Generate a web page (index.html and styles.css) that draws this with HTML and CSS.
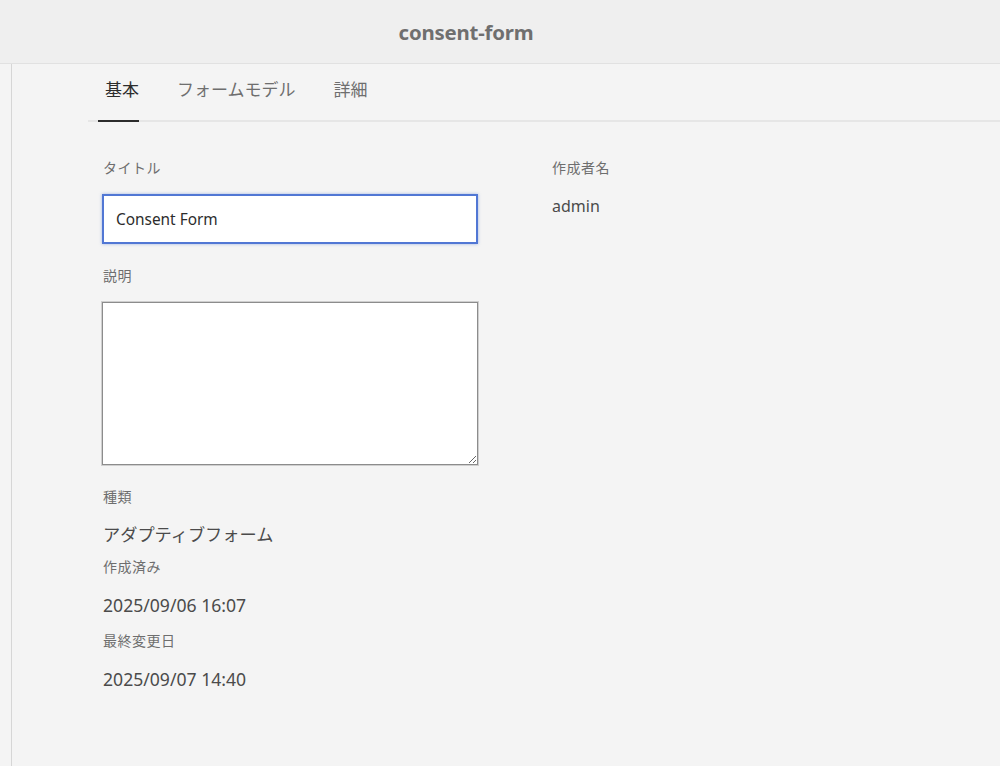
FILE: index.html
```html
<!DOCTYPE html>
<html lang="ja">
<head>
<meta charset="utf-8">
<title>consent-form</title>
<link rel="stylesheet" href="styles.css">
</head>
<body>
<header class="header">
  <h1 class="title">consent-form</h1>
</header>
<div class="main">
  <div class="rail"></div>
  <div class="content">
    <nav class="tabs">
      <div class="tab active">基本</div>
      <div class="tab">フォームモデル</div>
      <div class="tab">詳細</div>
    </nav>
    <div class="form">
      <div class="col left">
        <div class="label first">タイトル</div>
        <input class="input" type="text" value="Consent Form">
        <div class="label gap-lg">説明</div>
        <textarea class="textarea"></textarea>
        <div class="label gap-lg">種類</div>
        <div class="value kana">アダプティブフォーム</div>
        <div class="label gap-sm">作成済み</div>
        <div class="value">2025/09/06 16:07</div>
        <div class="label gap-md">最終変更日</div>
        <div class="value">2025/09/07 14:40</div>
      </div>
      <div class="col right">
        <div class="label first flush">作成者名</div>
        <div class="value author">admin</div>
      </div>
    </div>
  </div>
</div>
</body>
</html>
```

FILE: styles.css
```css
html, body {
  margin: 0;
  padding: 0;
}
body {
  background: #f4f4f4;
  font-family: "Noto Sans", "Noto Sans CJK JP", sans-serif;
  color: #4b4b4b;
  width: 1000px;
  height: 766px;
  overflow: hidden;
}
.header {
  height: 63px;
  background: #efefef;
  border-bottom: 1px solid #e1e1e1;
  display: flex;
  align-items: center;
  justify-content: center;
  padding-right: 68px;
}
.title {
  margin: 0;
  font-size: 20.4px;
  font-weight: 700;
  color: #6f6f6f;
  letter-spacing: -0.2px;
}
.main {
  display: flex;
  height: 702px;
}
.rail {
  width: 11px;
  border-right: 1px solid #d6d6d6;
  flex: none;
}
.content {
  flex: 1;
  margin-left: 76px;
}
.tabs {
  display: flex;
  height: 56px;
  border-bottom: 2px solid #e6e6e6;
  padding-left: 10px;
  gap: 38px;
}
.tab {
  display: flex;
  align-items: center;
  padding-bottom: 8px;
  font-size: 17px;
  color: #6e6e6e;
  font-family: "Noto Sans CJK JP", sans-serif;
}
.tab.active {
  color: #2c2c2c;
  padding-left: 7px;
  border-bottom: 2px solid #2c2c2c;
  margin-bottom: -2px;
}
.form {
  display: flex;
  padding-left: 14px;
  gap: 74px;
}
.col {
  display: flex;
  flex-direction: column;
  align-items: flex-start;
}
.col.left {
  width: 376px;
}
.label {
  font-size: 14px;
  line-height: 20px;
  letter-spacing: 0.5px;
  color: #6e6e6e;
  padding-left: 1px;
  margin-bottom: 16px;
}
.label.flush {
  padding-left: 0;
}
.label.first {
  margin-top: 36px;
}
.label.gap-lg {
  margin-top: 22px;
}
.label.gap-sm {
  margin-top: 10px;
  margin-bottom: 16px;
}
.label.gap-md {
  margin-top: 14px;
}
.input {
  box-sizing: border-box;
  width: 376px;
  height: 50px;
  margin: 0;
  border: 2px solid #5177d4;
  box-shadow: 0 0 3px rgba(75, 117, 214, 0.5);
  background: #fff;
  padding: 0 12px;
  font-family: "Noto Sans", sans-serif;
  font-size: 15.4px;
  color: #2c2c2c;
  outline: none;
}
.textarea {
  box-sizing: border-box;
  width: 376px;
  height: 163px;
  margin: 0;
  border: 1px solid #8c8c8c;
  box-shadow: 0 0 0 1px #cfcfcf;
  background: #fff;
  resize: both;
  outline: none;
}
.value {
  font-size: 17.6px;
  line-height: 24px;
  color: #4b4b4b;
  padding-left: 1px;
}
.value.kana {
  font-size: 17.2px;
}
.value.author {
  font-size: 16px;
  padding-left: 0;
}
```
